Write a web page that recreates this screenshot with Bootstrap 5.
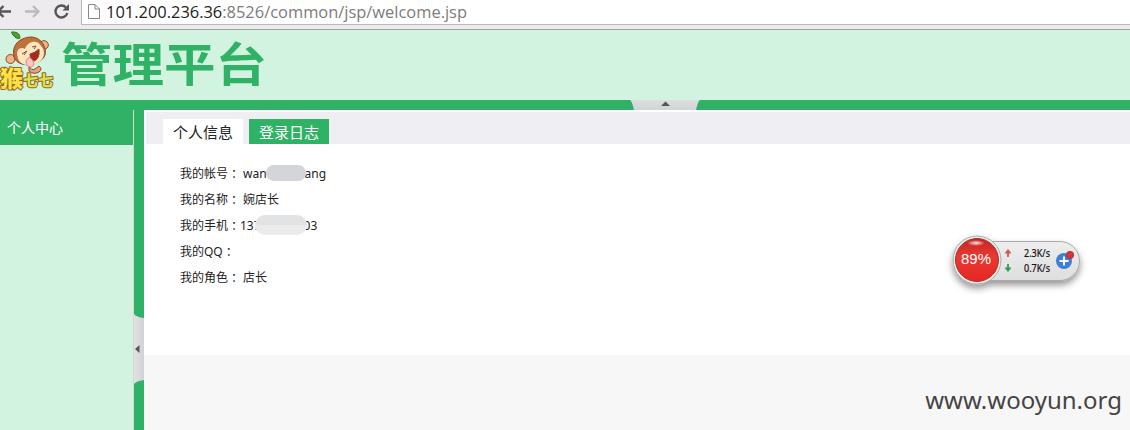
<!DOCTYPE html>
<html lang="zh-CN">
<head>
<meta charset="utf-8">
<meta name="viewport" content="width=device-width, initial-scale=1">
<title>管理平台</title>
<link href="https://cdn.jsdelivr.net/npm/bootstrap@5.3.0/dist/css/bootstrap.min.css" rel="stylesheet">
<style>
:root{--green:#2fb266;--mint:#d1f3df}
body{font-family:"Noto Sans","Noto Sans CJK SC",sans-serif;color:#222;font-size:12px;line-height:1.2}
svg{display:block}
.browser{height:30px;background:#edebed;border-bottom:1px solid #9aa39d}
.browser-icons{width:81px;height:29px}
.address{height:25px;border:1px solid #b9b7b9;border-top:0;border-right:0;padding-left:5px;font:17px/24px "Open Sans","Noto Sans",sans-serif;color:#777}
.brand-bar{height:70px;background:var(--mint)}
.brand-bar svg{overflow:visible}
.splitter-h{height:10px;background:var(--green);padding-left:630px}
.side{width:134px;background:var(--mint);border-right:1px solid #d3dccb}
.side-title{height:35px;background:var(--green);color:#fff;font-size:14px;padding:2px 0 0 7px}
.splitter-v{width:10px;background:var(--green);padding-top:204px}
.main{background:#f7f7f7}
.tabs{height:34px;background:#efeff3;border-top:2px solid #fff;border-left:2px solid #fff;padding-left:17px;gap:6px}
.tab{width:80px;height:25px;font:15px/25px "Noto Sans CJK SC",sans-serif;text-align:center;background:#fff;color:#222}
.tab-log{background:var(--green);color:#fff}
.info{height:211px;padding:16px 0 0 36px}
.info-row{height:26px;line-height:27px;white-space:pre}
.info-label{width:60px}
.colon{font-family:"Noto Sans CJK TC",sans-serif;line-height:1;vertical-align:-1px}
.value{margin-left:3px}
.smudge{background:#d3d5d9;border-radius:8px;z-index:1}
.smudge-a{width:40px;height:16px;margin:0 -1px 0 -1px}
.smudge-b{width:52px;height:20px;border-radius:10px;margin:0 -3px 0 -6px;background:linear-gradient(#e2e3e5 50%,#ebebec 50%)}
.watermark{font:24px/30px "Noto Sans",sans-serif;color:#444;right:8px;bottom:15px}
.monitor{left:942px;top:226px}
</style>
</head>
<body class="vh-100 overflow-hidden d-flex flex-column position-relative">
<header class="browser d-flex flex-shrink-0">
  <svg class="browser-icons flex-shrink-0" viewBox="0 0 81 29" fill="none">
    <path d="M-2 11.500H11M3.500 6L-2 11.500L3.500 17" stroke="#555" stroke-width="2.400"/>
    <path d="M25 11.500H38M33 6L38.500 11.500L33 17" stroke="#bbb" stroke-width="2.400"/>
    <path d="M66 7.500A6 6 0 1 0 67.300 13" stroke="#555" stroke-width="2.400"/>
    <path d="M69 4V10.500H62.500Z" fill="#555"/>
  </svg>
  <div class="address bg-white flex-grow-1 d-flex">
    <svg width="14" height="24" viewBox="0 0 14 24" fill="#fff" stroke="#888"><path d="M1.500 4.500H8L12.500 9V18.500H1.500ZM8 4.500V9H12.500"/></svg>
    <svg width="800" height="24"><text x="5" y="18" font-size="17" textLength="361" lengthAdjust="spacingAndGlyphs" fill="#7c7c7c"><tspan fill="#222">101.200.236.36</tspan>:8526/common/jsp/welcome.jsp</text></svg>
  </div>
</header>

<div class="brand-bar flex-shrink-0">
  <svg width="280" height="70" viewBox="0 30 280 70">
    <!-- monkey mascot -->
    <g stroke="#8a4a20" stroke-width="1">
      <path d="M20 38Q17 40 13 35Q10 31 13 32Q20 32 20 38Z" fill="#4f9d32" stroke="#35762a"/>
      <circle cx="10.500" cy="59" r="4.500" fill="#f3b588"/><circle cx="44" cy="45" r="4.300" fill="#f3b588"/>
      <path d="M29 66Q31 71 35 69L39 66Q43 69 39 72Q34 75 29 71Z" fill="#e8a078"/>
      <path d="M14 57C11 43 22 37 32 37C42 38 47 48 45 55C41 66 18 69 14 57Z" fill="#bd713b"/>
      <path d="M18 58C15 50 20 46 25 49C27 41 38 39 41 46C46 51 45 60 36 64C27 67 19 64 18 58Z" fill="#ffe5c0" stroke="none"/>
      <path d="M30 54Q35 53 39 49Q40 59 34 61Q30 60 30 54Z" fill="#a82724"/>
      <path d="M22 54L27 51L24 55M32 47L36 46L34 49" fill="none"/>
      <path d="M26 61Q29 54 33 61Q35 66 31 67Q26 67 26 61Z" fill="#ffc8c0" stroke="#dc8580"/>
    </g>
    <g font-family="Noto Sans CJK SC, sans-serif" font-weight="900" stroke="#98621e" stroke-width="2" stroke-linejoin="round" paint-order="stroke">
      <text x="0" y="87" font-size="23" fill="#ffe345">猴</text>
      <text x="23" y="86" font-size="15" fill="#d8e04a" textLength="30">七七</text>
    </g>
    <text x="61" y="80.500" font-family="Noto Sans CJK SC, sans-serif" font-weight="700" font-size="46" textLength="206" lengthAdjust="spacingAndGlyphs" fill="#2fb266">管理平台</text>
  </svg>
</div>

<div class="splitter-h flex-shrink-0">
  <svg width="70" height="10"><defs><linearGradient id="gripH" x2="0" y2="1"><stop stop-color="#dcdddd"/><stop offset="1" stop-color="#d4d4d6"/></linearGradient></defs><path d="M0 0H70Q68 1 66 10H4Q2 1 0 0Z" fill="url(#gripH)"/><path d="M31 6L35.500 1.500L40 6Z" fill="#555"/></svg>
</div>

<div class="d-flex flex-grow-1">
  <aside class="side flex-shrink-0"><div class="side-title d-flex align-items-center">个人中心</div></aside>
  <div class="splitter-v flex-shrink-0">
    <svg width="10" height="70"><defs><linearGradient id="gripV"><stop stop-color="#e2e2e5"/><stop offset="1" stop-color="#d2d2d6"/></linearGradient></defs><path d="M0 0Q2 3 10 4V66Q2 67 0 70Z" fill="url(#gripV)"/><path d="M5.500 31V39L1 35Z" fill="#555"/></svg>
  </div>
  <main class="main flex-grow-1">
    <nav class="tabs d-flex align-items-end">
      <div class="tab">个人信息</div>
      <div class="tab tab-log">登录日志</div>
    </nav>
    <section class="info bg-white">
      <div class="info-row d-flex align-items-center"><span class="info-label">我的帐号<span class="colon" lang="zh-TW">：</span></span><span class="value">wan</span><span class="smudge smudge-a"></span><span>ang</span></div>
      <div class="info-row d-flex"><span class="info-label">我的名称<span class="colon" lang="zh-TW">：</span></span><span class="value">婉店长</span></div>
      <div class="info-row d-flex align-items-center"><span class="info-label">我的手机<span class="colon" lang="zh-TW">：</span></span><span>137</span><span class="smudge smudge-b"></span><span>03</span></div>
      <div class="info-row">我的QQ<span class="colon" lang="zh-TW">：</span></div>
      <div class="info-row d-flex"><span class="info-label">我的角色<span class="colon" lang="zh-TW">：</span></span><span class="value">店长</span></div>
    </section>
  </main>
</div>

<div class="monitor position-absolute">
  <svg width="150" height="75" viewBox="942 226 150 75">
    <defs>
      <filter id="shade" x="-20%" y="-30%" width="140%" height="180%"><feDropShadow dx="0" dy="4" stdDeviation="3.500" flood-opacity=".42"/></filter>
      <linearGradient id="pill" x2="0" y2="1"><stop stop-color="#eee"/><stop offset="1" stop-color="#dedede"/></linearGradient>
      <linearGradient id="ball" x2="0" y2="1"><stop stop-color="#bd2522"/><stop offset=".4" stop-color="#ea3930"/><stop offset="1" stop-color="#e52723"/></linearGradient>
      <radialGradient id="shine"><stop stop-color="#fff" stop-opacity=".9"/><stop offset="1" stop-color="#fff" stop-opacity="0"/></radialGradient>
    </defs>
    <g filter="url(#shade)"><path d="M980 241.500H1060A19.500 19.500 0 0 1 1060 280.500H980Z" fill="url(#pill)" stroke="#aaa"/><circle cx="977" cy="260" r="24" fill="#f0eee6" stroke="#aaa"/></g>
    <circle cx="977" cy="260" r="21.500" fill="url(#ball)" stroke="#a33330"/>
    <ellipse cx="976" cy="243" rx="9" ry="3" fill="url(#shine)"/>
    <text x="961" y="264" font-family="Liberation Sans, sans-serif" font-size="14" textLength="30" lengthAdjust="spacingAndGlyphs" fill="#fff">89%</text>
    <path d="M1008 257V251.500M1005.500 253.500L1008 250.500L1010.500 253.500" stroke="#d4565a" stroke-width="1.800" fill="none"/>
    <path d="M1008 264V269.500M1005.500 267.500L1008 270.500L1010.500 267.500" stroke="#2f9b58" stroke-width="1.800" fill="none"/>
    <g font-family="Noto Sans, sans-serif" font-size="10" fill="#111" stroke="#111" stroke-width=".2"><text x="1024" y="257" textLength="26" lengthAdjust="spacingAndGlyphs">2.3K/s</text><text x="1024" y="272" textLength="26" lengthAdjust="spacingAndGlyphs">0.7K/s</text></g>
    <circle cx="1064" cy="261" r="8" fill="#3d80d8"/><path d="M1059.500 261H1068.500M1064 256.500V265.500" stroke="#fff" stroke-width="2"/>
    <circle cx="1070" cy="255" r="3.700" fill="#e03032" stroke="#8e3942" stroke-width=".8"/>
  </svg>
</div>
<div class="watermark position-absolute">www.wooyun.org</div>
<script src="https://cdn.jsdelivr.net/npm/bootstrap@5.3.0/dist/js/bootstrap.bundle.min.js"></script>
</body>
</html>
